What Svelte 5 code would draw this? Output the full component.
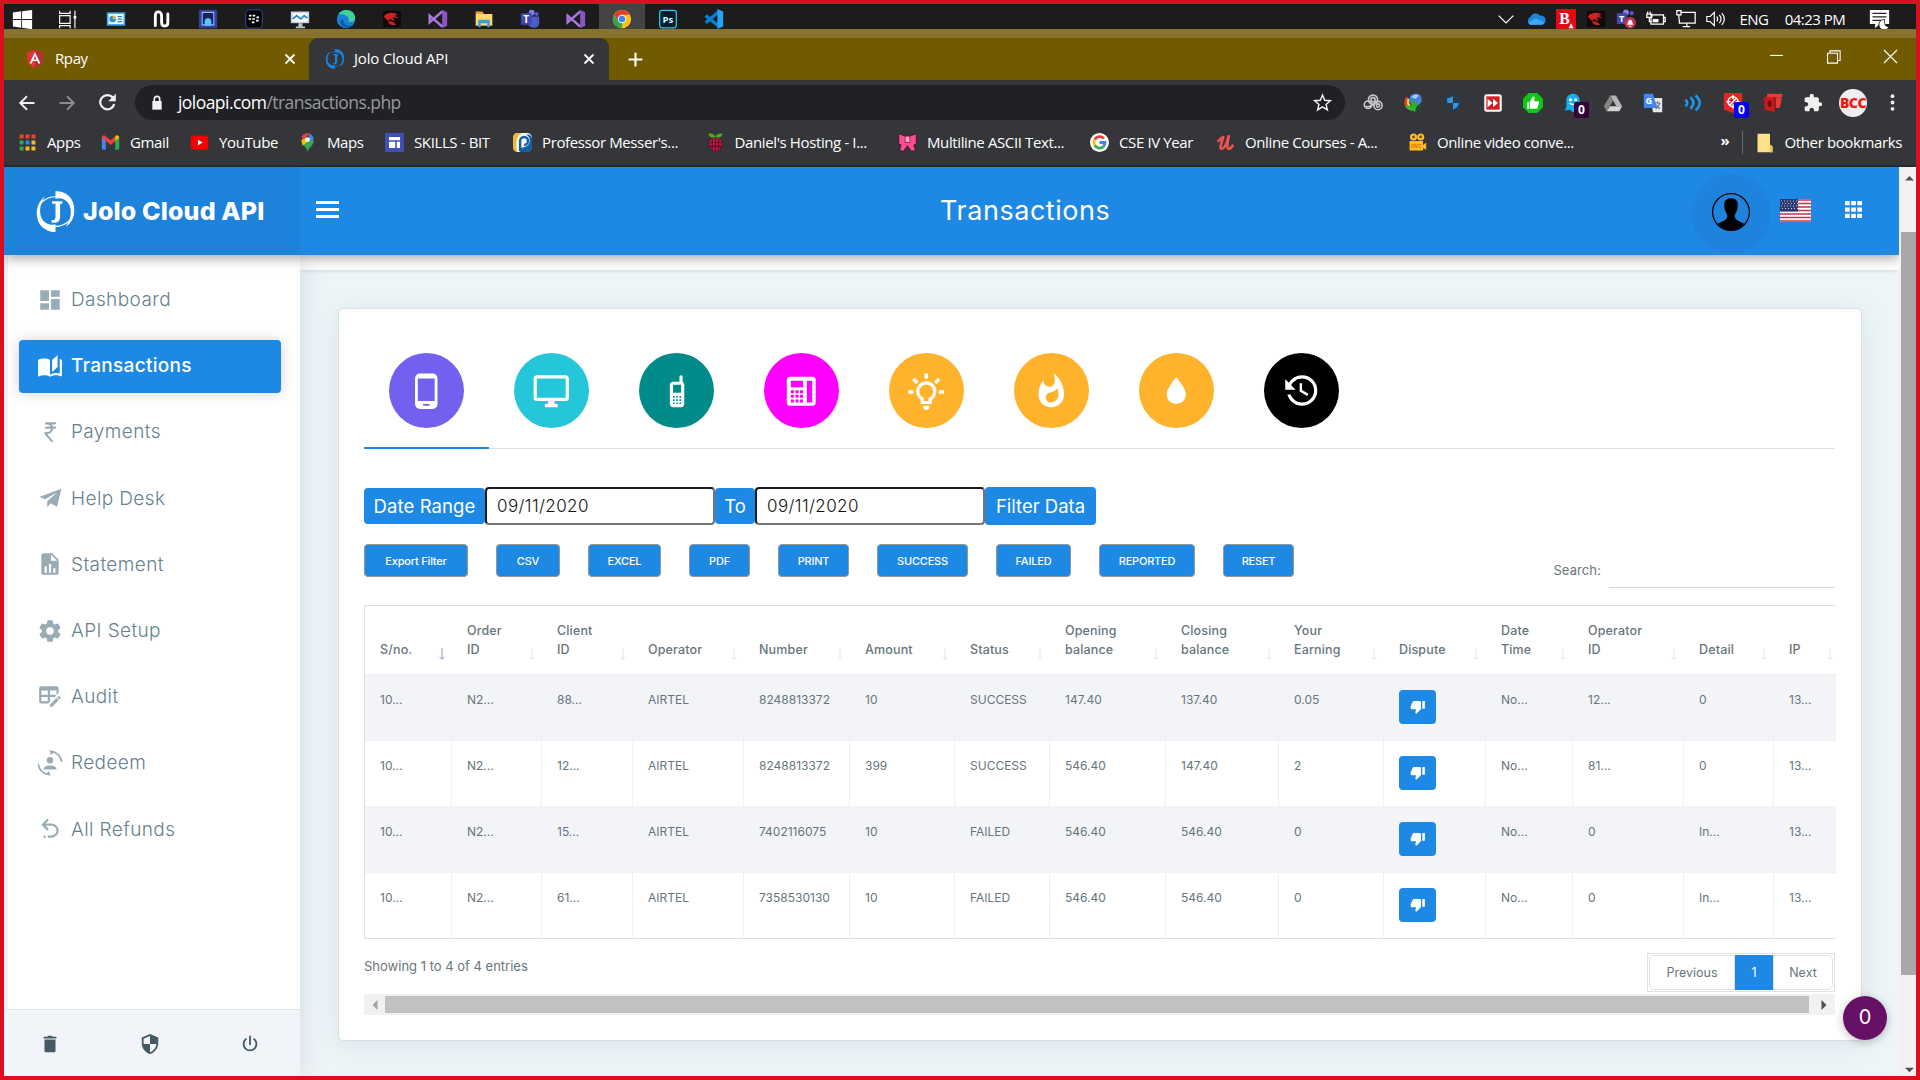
<script>
  // Shapes for every icon, on a 24 x 24 grid.
  const art = {
    windows: '<path fill="#fff" d="M1 4l9.500-1.300V11.500H1zM11.500 2.500L23 1v10.500H11.500zM1 12.500h9.500v8.800L1 20zM11.500 12.500H23V23l-11.500-1.500z"/>',
    taskview: '<path fill="none" stroke="#fff" stroke-width="1.300" d="M3 2v3h12V2M3 22v-3h12v3M3 7.500h12v9H3zM20.500 2v20"/><path fill="#fff" d="M19 8h3v3h-3z"/>',
    panel: '<path fill="#47a9e6" d="M1 4h22v16H1z"/><path fill="#e8f6ff" d="M3 6h18v12H3z"/><circle cx="8" cy="12" r="4" fill="#2f8fd0"/><path fill="#f2b632" d="M8 12V8a4 4 0 0 1 4 4z"/><path stroke="#2f7fc0" stroke-width="1.500" d="M14 9h5M14 12h5M14 15h5"/>',
    nu: '<path fill="none" stroke="#fff" stroke-width="3.400" stroke-linecap="round" d="M4 20V8c0-6 7.500-6 7.500 0v8c0 6 7.500 6 7.500 0V6"/>',
    frame: '<path fill="#2f3f9e" d="M1 1h22v22H1z"/><path fill="#18245e" stroke="#9db0ff" stroke-width="1.300" d="M5 4h14v15H5z"/><path fill="#57c5ff" d="M8 20v-5a4 4 0 0 1 8 0v5z"/>',
    bb: '<rect x="2" y="1" width="20" height="22" rx="4" fill="#050608" stroke="#3d4ea8"/><path fill="#fff" d="M6 7h3v2H6zM10.500 7h3v2h-3zM5.500 11h3v2h-3zM10 11h3v2h-3zM15 9h3v2h-3zM9.500 15h3v2h-3zM14.500 13h3v2h-3z"/>',
    monitorchart: '<path fill="#c9d3d8" d="M1 3h22v14H1z"/><path fill="#fff" d="M3 5h18v10H3z"/><path fill="none" stroke="#2487c9" stroke-width="2" d="M3 12l5-4 5 4 4-4 4 3"/><path fill="#b7c1c6" d="M10 17h5v4h3v2H7v-2h3z"/>',
    edge: '<circle cx="12" cy="12" r="11" fill="#1683d8"/><path fill="#43d19a" d="M3 6C9-2 23 0 23 11c0 4-4 5-8 4 2-5-3-9-12-9z"/><path fill="#0c59a4" d="M9 13c0 6 5 9 11 6-4 6-14 4-15-3 0-3 2-5 4-3z"/>',
    dragon: '<rect x="1" y="2" width="22" height="20" rx="3" fill="#120808"/><path fill="#cf2226" d="M2 9c4-5 12-6 17-2l-4 1 5 3-7-1 2 5-5-3-3 2zM7 15c4-1 8 1 10 4-5 1-8 0-10-4z"/>',
    vs: '<path fill="#8a54c6" d="M17 1l6 3v16l-6 3z"/><path fill="none" stroke="#a678de" stroke-width="3" d="M17 3L2 16V8l15 13"/>',
    folder: '<path fill="#e8a33b" d="M2 3h8l2 3h-10z"/><path fill="#ffd86b" d="M2 6h20v14H2z"/><path fill="#3f9be0" d="M5 22v-9h14v9h-3v-5H8v5z"/>',
    teams: '<circle cx="14" cy="4.500" r="3.500" fill="#7b83eb"/><circle cx="20" cy="6" r="2.500" fill="#5059c9"/><path fill="#5059c9" d="M10 9h13v8c0 6-10 8-13 2z"/><path fill="#4348a8" d="M1 5h13v14H1z"/><text x="4" y="16.500" font-size="12" font-weight="700" fill="#fff">T</text>',
    teamsalert: '<circle cx="12" cy="4" r="3.500" fill="#7b83eb"/><circle cx="19" cy="5" r="2.500" fill="#5059c9"/><path fill="#4348a8" d="M1 5h12v13H1z"/><text x="3.500" y="15.500" font-size="11" font-weight="700" fill="#fff">T</text><circle cx="17" cy="16.500" r="7" fill="#c4314b"/><path fill="#fff" d="M13 19c1.500-1 1-6 4-6s2.500 5 4 6zM15.500 20h3v1.300h-3z"/>',
    chrome: '<circle cx="12" cy="12" r="11" fill="#fbc116"/><path fill="#e33b2e" d="M2.500 6.500L7.500 15 12 7h9.500A11 11 0 0 0 2.500 6.500z"/><path fill="#2da94f" d="M2.500 6.500L7.700 15l5 1.500L11.500 23A11 11 0 0 1 2.500 6.500z"/><circle cx="12" cy="12" r="5" fill="#fff"/><circle cx="12" cy="12" r="4" fill="#3f83f0"/>',
    ps: '<rect x="2" y="1.500" width="20" height="21" rx="3" fill="#061e2b" stroke="#31c5f0" stroke-width="1.500"/><text x="5.500" y="16.500" font-size="11.500" font-weight="700" fill="#d9f5ff">Ps</text>',
    vscode: '<path fill="none" stroke="#0d7fd0" stroke-width="4" d="M17 4L2 16.500M17 20L2 8"/><path fill="#26a3f2" d="M16 0l7 3v18l-7 3z"/>',
    chevron: '<path fill="none" stroke="#fff" stroke-width="1.800" d="M1 7l11 11L23 7"/>',
    cloud: '<path fill="#1b86dc" d="M5 19a5 5 0 0 1 0-9 7 7 0 0 1 12-2 5.500 5.500 0 0 1 2 11z"/><path fill="#39a8f5" d="M3 16l9-5 10 5c-1 2-2 3-4 3H6c-2 0-3-1-3-3z"/>',
    bit: '<path fill="#df0b14" d="M0 0h24v25H0z"/><text x="4" y="18" font-size="19" font-weight="700" font-family="Liberation Serif" fill="#fff">B</text><path fill="#fff" d="M15 23l3-6 3 6z"/>',
    battery: '<path fill="none" stroke="#fff" stroke-width="1.500" d="M6 7h15v11H6zM21 10h2v5h-2M1 6h6v4H1zM2 3v3M5 3v3M4 10v5h3"/><path fill="#fff" d="M8 12h7v4H8z"/>',
    network: '<path fill="none" stroke="#fff" stroke-width="1.500" d="M6 4h17v13H4v-5M13 17v4M8 21h9M1 2h5v5H1zM3.500 7v5"/>',
    sound: '<path fill="none" stroke="#fff" stroke-width="1.400" d="M1 9h4l5-5v16l-5-5H1zM13 9q2 3 0 6M16 7q4 5 0 10M19 5q6 7 0 14"/>',
    notes: '<path fill="#fff" d="M1 1h22v16H12l-5 5v-5H1z"/><path stroke="#222" stroke-width="1.500" d="M4 5h16M4 9h16M4 13h10"/><path fill="#fff" stroke="#222" d="M18 12a6 6 0 1 0 5 8c-4 1-6-3-5-8z"/>',
    angular: '<path fill="#e23237" d="M12 1l10 3.500-1.500 13L12 23l-8.500-5.500L2 4.500z"/><path fill="#b52e31" d="M12 1l10 3.500-1.500 13L12 23z"/><path fill="#fff" d="M12 3.500L5.500 17.500H8l1.400-3.200h5.200l1.400 3.200h2.500zM12 8.500l1.800 4h-3.600z" fill-rule="evenodd"/>',
    jolo: '<path fill="currentColor" d="M12 0c7 0 11 5 11 11 0 5-2 8-5 10 2-3 3-6 3-9 0-5-4-9-9-7.500zM12 24C5 24 1 19 1 13c0-4 2-8 5-10-2 3-3 5-3 9 0 5 4 9 9 7.500z"/><ellipse cx="12" cy="12" rx="10.200" ry="8.700" fill="none" stroke="currentColor" stroke-width=".6"/><path fill="currentColor" d="M10 6h6v1.500h-1.300V15c0 3-2 4-5 3.500V17c1.500.2 2.300-.3 2.300-2V7.500h-2z"/>',
    close: '<path fill="none" stroke="currentColor" stroke-width="3.600" d="M3 3l18 18M21 3L3 21"/>',
    plus: '<path fill="none" stroke="currentColor" stroke-width="3.400" d="M12 1v22M1 12h22"/>',
    winmin: '<path stroke="#fff" stroke-width="2" d="M0 10h24"/>',
    winmax: '<path fill="none" stroke="#fff" stroke-width="1.800" d="M1 5.500h17v17H1zM5 5V1.500h17.500V18h-4"/>',
    winclose: '<path fill="none" stroke="#fff" stroke-width="2" d="M0 0l24 24M24 0L0 24"/>',
    back: '<path fill="none" stroke="currentColor" stroke-width="2.500" d="M22 12H3M12 3l-9 9 9 9"/>',
    forward: '<path fill="none" stroke="currentColor" stroke-width="2.500" d="M2 12h19M12 3l9 9-9 9"/>',
    reload: '<path fill="none" stroke="currentColor" stroke-width="2.800" d="M20.500 14A9 9 0 1 1 18.500 5.500L21 8"/><path fill="currentColor" d="M22.500 1v9.500H13z"/>',
    lock: '<path fill="currentColor" d="M5 9h14v13H5z"/><path fill="none" stroke="currentColor" stroke-width="2.500" d="M8 10V6a4 4 0 0 1 8 0v4"/>',
    star: '<path fill="none" stroke="currentColor" stroke-width="1.800" d="M12 2.500l2.800 6.600 7.200.6-5.500 4.700 1.700 7L12 17.600l-6.200 3.800 1.700-7L2 9.700l7.200-.6z"/>',
    rings: '<g fill="none" stroke="#c9c9c9" stroke-width="1.900"><circle cx="12" cy="8" r="5.500"/><circle cx="12" cy="8" r="2.500"/><circle cx="6" cy="14" r="4.500"/><circle cx="18" cy="15" r="5"/><circle cx="18" cy="15" r="2"/><path d="M3 16q5 2 10-3"/></g>',
    globe: '<g fill="none" stroke-width="3"><path stroke="#e0392b" d="M5 5Q0 13 7 19"/><path stroke="#f2dc2a" d="M7 7q-3 6 3 11"/><path stroke="#3db54a" d="M4 15q3 5 9 5"/></g><circle cx="15" cy="8" r="7.500" fill="#4a7fe0"/><path fill="#a9cdfa" d="M10 5q4-5 9-2l-4 4z"/><path fill="#2fae2f" d="M10 10h7v5h5l-8 8-8-8h4z"/><path fill="#12500f" d="M17 15h5l-8 8z"/>',
    shieldblue: '<path fill="#1e3d5c" d="M12 1l9 3v8c0 6-5 9-9 11-4-2-9-5-9-11V4z"/><path fill="#35363a" d="M12 3l7 2.500V12c0 5-4 7-7 9-3-2-7-4-7-9V5.500z"/><path fill="#2f95e3" d="M12 4v8H5V6.500zM12 12h7c0 4-4 7-7 8z"/>',
    skip: '<rect x="1.500" y="1.500" width="21" height="21" rx="3" fill="#fff"/><path fill="#d01f22" d="M4 4h16v16H4z"/><path fill="#fff" d="M5.500 7l6 5-6 5zM12 7l6 5-6 5z"/>',
    thumb: '<path fill="#10c617" d="M7 0h10l7 7v10l-7 7H7l-7-7V7z"/><path fill="#fff" d="M5 11h2v8H5zM8 11l4-7 2 1-.5 5H19v3l-2 6H8z"/>',
    ghost: '<path fill="#17aef0" d="M4 9c0-11 16-11 16 0v10l2 4-6-2-4 2-4-3-6 1 2-4z"/><circle cx="9" cy="8" r="1.800" fill="#fff"/><circle cx="15" cy="8" r="1.800" fill="#fff"/><path d="M8 12q4 4 8 0" stroke="#fff" stroke-width="1.500" fill="none"/>',
    drive: '<path fill="#b5b5b5" d="M8.500 3h7L23 16h-7z"/><path fill="#858585" d="M8.500 3L1 16l3.500 6L12 9z"/><path fill="#d3d3d3" d="M8.500 16H23l-3.500 6h-15z"/>',
    translate: '<path fill="#e4e7ec" d="M9 6h14v17H12z"/><path fill="#4285f4" d="M1 1h11l5 17H1z"/><text x="3" y="13" font-size="11" font-weight="700" fill="#fff">G</text><path stroke="#6a7280" stroke-width="1.300" fill="none" d="M14 12h7M17.500 10v2M20 12q-1 5-5 7M15.500 14l5 5"/>',
    waves: '<path fill="none" stroke="#1999f2" stroke-width="3" d="M3 8q4 4 0 8M9 5q7 7 0 14M15 3q10 9 0 18"/>',
    target: '<path fill="#e32426" d="M1 0h22v20l-11 4-11-4z"/><g fill="none" stroke="#fff" stroke-width="1.700"><circle cx="12" cy="10.500" r="6"/><path d="M4 10.500h5M15 10.500h5M12 2.500v5M12 13.500v5M8.500 14.500l7-8"/></g>',
    tag: '<path fill="#c8191c" d="M1 5l13-3v21L2 20z"/><path fill="#ee3a36" d="M5 1h18v4H5z"/><path fill="#ee3a36" d="M15 5h7v5l-2 8h-5z"/><ellipse cx="8" cy="13" rx="2.500" ry="4" fill="#6f0f10"/><path stroke="#8d1112" d="M14.500 5v16"/>',
    puzzle: '<path fill="#f1f1f1" d="M20.500 11H19V7C19 5.890 18.100 5 17 5H13V3.500A2.500 2.500 0 0 0 8 3.500V5H4A2 2 0 0 0 2 7V10.800H3.500C5 10.800 6.200 12 6.200 13.500S5 16.200 3.500 16.200H2V20A2 2 0 0 0 4 22H7.800V20.500C7.800 19 9 17.800 10.500 17.800S13.200 19 13.200 20.500V22H17A2 2 0 0 0 19 20V16H20.500A2.500 2.500 0 0 0 20.500 11Z"/>',
    dots: '<g fill="currentColor"><circle cx="12" cy="4" r="2.400"/><circle cx="12" cy="12" r="2.400"/><circle cx="12" cy="20" r="2.400"/></g>',
    appgrid: '<path fill="#ee4035" d="M2 2h5v5H2zM9.500 2h5v5h-5zM17 2h5v5h-5z"/><path fill="#2fa84f" d="M2 9.500h5v5H2zM2 17h5v5H2z"/><path fill="#2f86ee" d="M9.500 9.500h5v5h-5z"/><path fill="#f5b72c" d="M17 9.500h5v5h-5zM9.500 17h5v5h-5zM17 17h5v5h-5z"/>',
    gmail: '<path fill="#4285f4" d="M1 6h5v15H2l-1-1z"/><path fill="#34a853" d="M18 6h5v14l-1 1h-4z"/><path fill="#ea4335" d="M1 6c0-3 3-4 5-2l6 5 6-5v6l-6 5-6-5-5-4z"/><path fill="#fbbc04" d="M18 4c2-2 5-1 5 2l-5 4z"/>',
    youtube: '<rect x="1" y="3" width="22" height="18" rx="4" fill="#f50000"/><path fill="#fff" d="M10 8.500l6 3.500-6 3.500z"/>',
    pin: '<path fill="#34a853" d="M5 13c3 4 6 5 7 11 1-6 8-8 8-15l-4-4z"/><path fill="#ea4335" d="M5 4c3-4 7-4 10-3L6 10z"/><path fill="#4285f4" d="M14 1c4 1 5 4 6 6l-6 4z"/><path fill="#fbbc04" d="M4 9l6-3 1 6-5 4z"/><circle cx="12" cy="8.500" r="3" fill="#f6f6f6"/>',
    skills: '<path fill="#3f4fb5" d="M0 0h24v24H0z"/><path fill="#fff" d="M5 5h14v4H5zM5 11h8v8H5zM15 11h4v8h-4z"/>',
    messer: '<rect width="24" height="24" rx="6" fill="#f5f5f5"/><path fill="#f0b733" d="M0 6q0-6 6-6h6C5 2 3 10 5 24Q0 22 0 18z"/><path fill="#155e9f" d="M14 18c9-2 9-12 3-16h3q4 2 4 5v12q0 5-5 5H9v-5z"/><path fill="none" stroke="#155e9f" stroke-width="3" d="M9 23V10a5 5 0 1 1 5 5"/>',
    berry: '<path fill="#55a51c" d="M3 1c5-1 8 1 9 4 1-3 4-5 9-4-1 4-4 6-9 6S4 5 3 1z"/><path fill="#c51a4a" stroke="#391019" d="M12 6c8 0 9 5 8 10-1 4-5 7-8 7s-7-3-8-7C3 11 4 6 12 6z"/><path stroke="#5e0b23" stroke-width="1.500" d="M8 8v12M12 7v15M16 8v12M5 12h14M5 17h14"/>',
    bow: '<path fill="#ff4d94" stroke="#3c1324" d="M1 1l8 3h6l8-3v13l-3 1 2 7-5 1-5-7-5 7-5-1 2-7-3-1z"/><path fill="#ff9cc6" stroke="#7c1f49" d="M9 4h6v8H9z"/>',
    google: '<circle cx="12" cy="12" r="12" fill="#fff"/><path fill="none" stroke="#ea4335" stroke-width="3.500" d="M17.500 7A7 7 0 0 0 6 8.500"/><path fill="none" stroke="#fbbc05" stroke-width="3.500" d="M6 8.500a7 7 0 0 0 0 7"/><path fill="none" stroke="#34a853" stroke-width="3.500" d="M6 15.500a7 7 0 0 0 11 1.500"/><path fill="none" stroke="#4285f4" stroke-width="3.500" d="M12 12h7a7 7 0 0 1-2 5"/>',
    udemy: '<path fill="none" stroke="#ec5252" stroke-width="3.300" stroke-linecap="round" stroke-linejoin="round" d="M3 10c4-3 7-7 6-4-2 6-5 14-2 14 4 0 7-8 9-16-1 6-3 16 0 16 2 0 4-2 5-4"/>',
    camera: '<g fill="#ffbd21"><circle cx="7" cy="5" r="4.500"/><circle cx="16" cy="5" r="4.500"/><path d="M2 10h17v12H2zM19 15l4-3v9l-4-2z"/></g><circle cx="7" cy="5" r="1.700" fill="#6b4c00"/><circle cx="16" cy="5" r="1.700" fill="#6b4c00"/><text x="3.500" y="19" font-size="7" font-weight="700" fill="#e66a00">OVC</text>',
    bookfolder: '<path fill="#ffe08a" d="M3 1h15v13l3 2v7H3z"/><path fill="#e9c25c" d="M18 14l3 2v7h-3z"/>',
    dashboard: '<path d="M13 3V9H21V3M13 21H21V11H13M3 21H11V15H3M3 13H11V3H3V13Z"/>',
    book: '<path d="M19 2L14 6.500V17.500L19 13V2M6.500 5C4.550 5 2.450 5.400 1 6.500V21.160C1 21.410 1.250 21.660 1.500 21.660C1.600 21.660 1.650 21.590 1.750 21.590C3.100 20.940 5.050 20.500 6.500 20.500C8.450 20.500 10.550 20.900 12 22C13.350 21.150 15.800 20.500 17.500 20.500C19.150 20.500 20.850 20.810 22.250 21.560C22.350 21.610 22.400 21.590 22.500 21.590C22.750 21.590 23 21.340 23 21.090V6.500C22.400 6.050 21.750 5.750 21 5.500V19C19.900 18.650 18.700 18.500 17.500 18.500C15.800 18.500 13.350 19.150 12 20V6.500C10.550 5.400 8.450 5 6.500 5Z"/>',
    rupee: '<path d="M8 3H18L17 5H13.740C14.220 5.580 14.580 6.260 14.790 7H18L17 9H15C14.750 11.570 12.740 13.630 10.200 13.960V14H9.500L15.500 21H13L7 14V12H9.500C11.260 12 12.720 10.700 12.960 9H7L8 7H12.660C12.100 5.820 10.900 5 9.500 5H7L8 3Z"/>',
    plane: '<path d="M22.500 3.500L2 11l5.500 2.200L18.500 7 9.500 15v5.500l3-3.700 6 3.200z"/>',
    filechart: '<path d="M13 9H18.500L13 3.500V9M6 2H14L20 8V20A2 2 0 0 1 18 22H6C4.890 22 4 21.100 4 20V4C4 2.890 4.890 2 6 2M7 20H9V14H7V20M11 20H13V12H11V20M15 20H17V16H15V20Z"/>',
    gear: '<path d="M12 15.500A3.500 3.500 0 0 1 8.500 12A3.500 3.500 0 0 1 12 8.500A3.500 3.500 0 0 1 15.500 12A3.500 3.500 0 0 1 12 15.500M19.430 12.970C19.470 12.650 19.500 12.330 19.500 12C19.500 11.670 19.470 11.340 19.430 11L21.540 9.370C21.730 9.220 21.780 8.950 21.660 8.730L19.660 5.270C19.540 5.050 19.270 4.960 19.050 5.050L16.560 6.050C16.040 5.660 15.500 5.320 14.870 5.070L14.500 2.420C14.460 2.180 14.250 2 14 2H10C9.750 2 9.540 2.180 9.500 2.420L9.130 5.070C8.500 5.320 7.960 5.660 7.440 6.050L4.950 5.050C4.730 4.960 4.460 5.050 4.340 5.270L2.340 8.730C2.210 8.950 2.270 9.220 2.460 9.370L4.570 11C4.530 11.340 4.500 11.670 4.500 12C4.500 12.330 4.530 12.650 4.570 12.970L2.460 14.630C2.270 14.780 2.210 15.050 2.340 15.270L4.340 18.730C4.460 18.950 4.730 19.030 4.950 18.950L7.440 17.940C7.960 18.340 8.500 18.680 9.130 18.930L9.500 21.580C9.540 21.820 9.750 22 10 22H14C14.250 22 14.460 21.820 14.500 21.580L14.870 18.930C15.500 18.670 16.040 18.340 16.560 17.940L19.050 18.950C19.270 19.030 19.540 18.950 19.660 18.730L21.660 15.270C21.780 15.050 21.730 14.780 21.540 14.630L19.430 12.970Z"/>',
    tableedit: '<path d="M21.700 13.350L20.700 14.350L18.650 12.300L19.650 11.300C19.860 11.080 20.210 11.080 20.420 11.300L21.700 12.580C21.920 12.790 21.920 13.140 21.700 13.350M12 18.940V21H14.060L20.120 14.880L18.070 12.830L12 18.940M4 2H18A2 2 0 0 1 20 4V8.170L16.170 12H12V16.170L10.170 18H4A2 2 0 0 1 2 16V4A2 2 0 0 1 4 2M4 6V10H10V6H4M12 6V10H18V6H12M4 12V16H10V12H4Z"/>',
    redeem: '<circle cx="12" cy="9.500" r="3"/><path d="M6 18c0-5 12-5 12 0z"/><path fill="none" stroke="currentColor" stroke-width="1.500" d="M12.500 1.200A11 11 0 0 1 22.800 11M11.500 22.800A11 11 0 0 1 1.200 13"/><path d="M11.500.4l5 1-3.500 3.200zM12.500 23.600l-5-1 3.500-3.200z"/>',
    undo: '<path d="M13.500 7A6.500 6.500 0 0 1 13.500 20H10V18H13.500A4.500 4.500 0 0 0 13.500 9H7.830L10.910 12.090L9.500 13.500L4 8L9.500 2.500L10.920 3.910L7.830 7H13.500M6 18H8V20H6V18Z"/>',
    trash: '<path d="M5 4h4l1-1h4l1 1h4v2H5zM6 7h12v12.500a1.500 1.500 0 0 1-1.500 1.500h-9A1.500 1.500 0 0 1 6 19.500z"/>',
    security: '<path fill-rule="evenodd" d="M12 12H19C18.470 16.110 15.720 19.780 12 20.920V12H5V6.300L12 3.190M12 1L3 5V11C3 16.550 6.840 21.730 12 23C17.160 21.730 21 16.550 21 11V5L12 1Z"/>',
    power: '<path d="M16.560 5.440L15.110 6.890C16.840 7.940 18 9.830 18 12A6 6 0 0 1 6 12C6 9.830 7.160 7.940 8.880 6.880L7.440 5.440C5.360 6.880 4 9.280 4 12A8 8 0 0 0 20 12C20 9.280 18.640 6.880 16.560 5.440M13 3H11V13H13"/>',
    phone: '<path d="M17.250 18H6.750V4H17.250M14 21H10V20H14M16 1H8A3 3 0 0 0 5 4V20A3 3 0 0 0 8 23H16A3 3 0 0 0 19 20V4A3 3 0 0 0 16 1Z"/>',
    monitor: '<path d="M21 16H3V4H21M21 2H3C1.890 2 1 2.890 1 4V16A2 2 0 0 0 3 18H10V20H8V22H16V20H14V18H21A2 2 0 0 0 23 16V4C23 2.890 22.100 2 21 2Z"/>',
    basic: '<path d="M15 2A1 1 0 0 0 14 3V6H10C8.890 6 8 6.890 8 8V20C8 21.110 8.890 22 10 22H15C16.110 22 17 21.110 17 20V8C17 7.260 16.600 6.620 16 6.280V3A1 1 0 0 0 15 2M10 8H15V13H10V8M10 15H11V16H10V15M12 15H13V16H12V15M14 15H15V16H14V15M10 17H11V18H10V17M12 17H13V18H12V17M14 17H15V18H14V17M10 19H11V20H10V19M12 19H13V20H12V19M14 19H15V20H14V19Z"/>',
    desk: '<path fill-rule="evenodd" d="M5 3h14a2 2 0 0 1 2 2v14a2 2 0 0 1-2 2H5a2 2 0 0 1-2-2V5a2 2 0 0 1 2-2zM5.500 5.500v4h7.600v-4zM15.500 5.500V19h3.300V5.500zM5.500 11.300v1.900h1.900v-1.900zM8.400 11.300v1.900h1.900v-1.900zM11.200 11.300v1.900h1.900v-1.900zM5.500 14.200v1.900h1.900v-1.900zM8.400 14.200v1.900h1.900v-1.900zM11.200 14.200v1.900h1.900v-1.900zM5.500 17.100V19h1.900v-1.900zM8.400 17.100V19h1.900v-1.900zM11.200 17.100V19h1.900v-1.900z"/>',
    bulb: '<g fill="none" stroke="currentColor" stroke-width="2"><path d="M9.500 19v-2.300a5.300 5.300 0 1 1 5 0V19z"/></g><path d="M10 21h4v1.500l-1 1h-2l-1-1z"/><path fill="none" stroke="currentColor" stroke-width="2.200" d="M12 1v3.200M.8 12.500h3.400M19.800 12.500h3.400M4 4.300l2.400 2.500M20 4.300l-2.400 2.500"/>',
    fire: '<path d="M13.500.67s.74 2.650.74 4.800c0 2.060-1.350 3.730-3.410 3.730-2.070 0-3.630-1.670-3.630-3.730l.03-.36C5.210 7.510 4 10.620 4 14c0 4.420 3.580 8 8 8s8-3.580 8-8C20 8.610 17.410 3.800 13.500.67zM11.710 19c-1.780 0-3.220-1.400-3.220-3.140 0-1.620 1.050-2.760 2.810-3.120 1.770-.36 3.600-1.210 4.620-2.580.39 1.290.59 2.650.59 4.040 0 2.650-2.150 4.800-4.800 4.800z"/>',
    water: '<path d="M12 20A6 6 0 0 1 6 14C6 10 12 3.250 12 3.250C12 3.250 18 10 18 14A6 6 0 0 1 12 20Z"/>',
    history: '<path d="M11 7V12.110L15.710 14.900L16.500 13.620L12.500 11.250V7M12.500 2C8.970 2 5.910 3.920 4.270 6.770L2 4.500V11H8.500L5.750 8.250C6.960 5.730 9.500 4 12.500 4A7.500 7.500 0 0 1 12.500 19C9.230 19 6.470 16.910 5.440 14H3.340C4.440 18.030 8.110 21 12.500 21A9.500 9.500 0 0 0 12.500 2Z"/>',
    dislike: '<path d="M19 15H23V3H19M15 3H6C5.170 3 4.460 3.500 4.160 4.220L1.140 11.270C1.050 11.500 1 11.740 1 12V14A2 2 0 0 0 3 16H9.310L8.360 20.570C8.340 20.670 8.330 20.770 8.330 20.880C8.330 21.300 8.500 21.670 8.770 21.940L9.830 23L16.410 16.410C16.780 16.050 17 15.550 17 15V5C17 3.890 16.100 3 15 3Z"/>',
    user: '<circle cx="12" cy="12" r="11.600" fill="none" stroke="#000" stroke-width=".8"/><path fill="#000" d="M12 3.300c3 0 4.500 1.700 4.300 4.500-.1 3-1.100 4.700-1.800 5.700-.5 2.500.5 3.500 5.700 5.700C18 22 15 23.500 12 23.500S6 22 3.800 19.200c5.200-2.200 6.200-3.200 5.700-5.700-.7-1-1.700-2.700-1.800-5.700C7.500 5 9 3.300 12 3.300z"/>',
    grid: '<path d="M0 0h6.600v6H0zM8.700 0h6.600v6H8.700zM17.400 0H24v6h-6.600zM0 9h6.600v6H0zM8.700 9h6.600v6H8.700zM17.400 9H24v6h-6.600zM0 18h6.600v6H0zM8.700 18h6.600v6H8.700zM17.400 18H24v6h-6.600z"/>',
    sort: '<path fill="none" stroke="currentColor" stroke-width="1.600" d="M12 0v22M7 18l5 4.500 5-4.500"/>',
    up: '<path d="M0 17L12 5l12 12z"/>',
    down: '<path d="M0 7l12 12L24 7z"/>',
    left: '<path d="M18 0v24L6 12z"/>',
    right: '<path d="M6 0v24l12-12z"/>'
  };

  const pinned = ['panel', 'nu', 'frame', 'bb', 'monitorchart', 'edge', 'dragon', 'vs', 'folder', 'teams', 'vs', 'chrome', 'ps', 'vscode'];
  const tray = ['chevron', 'cloud', 'bit', 'dragon', 'teamsalert', 'battery', 'network', 'sound'];

  const extensions = [
    { icon: 'rings' }, { icon: 'globe' }, { icon: 'shieldblue' }, { icon: 'skip' }, { icon: 'thumb' },
    { icon: 'ghost', badge: '0', tone: 'plum' }, { icon: 'drive' }, { icon: 'translate' }, { icon: 'waves' },
    { icon: 'target', badge: '0', tone: 'blue' }, { icon: 'tag' }, { icon: 'puzzle' }
  ];

  const bookmarks = [
    { icon: 'appgrid', label: 'Apps', width: 83 },
    { icon: 'gmail', label: 'Gmail', width: 89 },
    { icon: 'youtube', label: 'YouTube', width: 108 },
    { icon: 'pin', label: 'Maps', width: 87 },
    { icon: 'skills', label: 'SKILLS - BIT', width: 128 },
    { icon: 'messer', label: "Professor Messer's...", width: 192.5 },
    { icon: 'berry', label: "Daniel's Hosting - I...", width: 192.5 },
    { icon: 'bow', label: 'Multiline ASCII Text...', width: 192 },
    { icon: 'google', label: 'CSE IV Year', width: 126 },
    { icon: 'udemy', label: 'Online Courses - A...', width: 192 },
    { icon: 'camera', label: 'Online video conve...', width: 180 }
  ];

  const menu = [
    { icon: 'dashboard', label: 'Dashboard' },
    { icon: 'book', label: 'Transactions', active: true },
    { icon: 'rupee', label: 'Payments' },
    { icon: 'plane', label: 'Help Desk' },
    { icon: 'filechart', label: 'Statement' },
    { icon: 'gear', label: 'API Setup' },
    { icon: 'tableedit', label: 'Audit' },
    { icon: 'redeem', label: 'Redeem' },
    { icon: 'undo', label: 'All Refunds' }
  ];

  const services = [
    { icon: 'phone', tone: 'violet' },
    { icon: 'monitor', tone: 'cyan' },
    { icon: 'basic', tone: 'teal' },
    { icon: 'desk', tone: 'magenta' },
    { icon: 'bulb', tone: 'amber' },
    { icon: 'fire', tone: 'amber' },
    { icon: 'water', tone: 'amber' },
    { icon: 'history', tone: 'black' }
  ];

  const exportButtons = [
    { label: 'Export Filter', width: 104 }, { label: 'CSV', width: 64 }, { label: 'EXCEL', width: 73 },
    { label: 'PDF', width: 61 }, { label: 'PRINT', width: 71 }, { label: 'SUCCESS', width: 91 },
    { label: 'FAILED', width: 75 }, { label: 'REPORTED', width: 96 }, { label: 'RESET', width: 71 }
  ];

  const columns = [
    { label: 'S/no.', width: 87 }, { label: 'Order ID', width: 90 }, { label: 'Client ID', width: 91 },
    { label: 'Operator', width: 111 }, { label: 'Number', width: 106 }, { label: 'Amount', width: 105 },
    { label: 'Status', width: 95 }, { label: 'Opening balance', width: 116 }, { label: 'Closing balance', width: 113 },
    { label: 'Your Earning', width: 105 }, { label: 'Dispute', width: 102 }, { label: 'Date Time', width: 87 },
    { label: 'Operator ID', width: 111 }, { label: 'Detail', width: 90 }, { label: 'IP', width: 62 }
  ];

  const rows = [
    ['10...', 'N2...', '88...', 'AIRTEL', '8248813372', '10', 'SUCCESS', '147.40', '137.40', '0.05', null, 'No...', '12...', '0', '13...'],
    ['10...', 'N2...', '12...', 'AIRTEL', '8248813372', '399', 'SUCCESS', '546.40', '147.40', '2', null, 'No...', '81...', '0', '13...'],
    ['10...', 'N2...', '15...', 'AIRTEL', '7402116075', '10', 'FAILED', '546.40', '546.40', '0', null, 'No...', '0', 'In...', '13...'],
    ['10...', 'N2...', '61...', 'AIRTEL', '7358530130', '10', 'FAILED', '546.40', '546.40', '0', null, 'No...', '0', 'In...', '13...']
  ];
</script>

{#snippet icon(name, size = 20)}
  <svg class="icon" viewBox="0 0 24 24" width={size} height={size} fill="currentColor" aria-hidden="true">{@html art[name]}</svg>
{/snippet}

<div class="screen">
  <div class="taskbar">
    <span class="slot start">{@render icon('windows', 21)}</span>
    <span class="slot views">{@render icon('taskview', 21)}</span>
    {#each pinned as name}
      <span class="slot app" class:running={name === 'chrome'}>{@render icon(name, 20)}</span>
    {/each}
    <div class="tray">
      {#each tray as name}
        <span class="slot status">{@render icon(name, name === 'chevron' ? 16 : 20)}</span>
      {/each}
      <span class="slot lang">ENG</span>
      <span class="slot clock">04:23 PM</span>
      <span class="slot notes">{@render icon('notes', 21)}</span>
    </div>
  </div>
  <div class="strip"></div>

  <div class="tabs">
    <div class="tab">
      {@render icon('angular', 20)}<span class="tab-title">Rpay</span>{@render icon('close', 12)}
    </div>
    <div class="tab current">
      <span class="favicon">{@render icon('jolo', 20)}</span><span class="tab-title">Jolo Cloud API</span>{@render icon('close', 12)}
    </div>
    <span class="new-tab">{@render icon('plus', 15)}</span>
    <div class="window-controls">
      <span>{@render icon('winmin', 13)}</span>
      <span>{@render icon('winmax', 14)}</span>
      <span>{@render icon('winclose', 13)}</span>
    </div>
  </div>

  <div class="toolbar">
    <span class="nav-btn">{@render icon('back', 18)}</span>
    <span class="nav-btn dim">{@render icon('forward', 18)}</span>
    <span class="nav-btn">{@render icon('reload', 19)}</span>
    <div class="address">
      {@render icon('lock', 16)}
      <span class="url">joloapi.com<span class="path">/transactions.php</span></span>
      {@render icon('star', 19)}
    </div>
    <div class="extensions">
      {#each extensions as ext}
        <span class="ext">
          {@render icon(ext.icon, 20)}
          {#if ext.badge}<span class="count {ext.tone}">{ext.badge}</span>{/if}
        </span>
      {/each}
    </div>
    <span class="profile">BCC</span>
    <span class="more">{@render icon('dots', 19)}</span>
  </div>

  <div class="bookmarks">
    {#each bookmarks as mark}
      <span class="bookmark" style:width="{mark.width}px">{@render icon(mark.icon, 19)}<span>{mark.label}</span></span>
    {/each}
    <div class="other">
      <span class="overflow">»</span>
      <span class="bookmark">{@render icon('bookfolder', 20)}<span>Other bookmarks</span></span>
    </div>
  </div>

  <div class="page">
    <header>
      <div class="brand">{@render icon('jolo', 41)}<span>Jolo Cloud API</span></div>
      <div class="bar">
        <div class="burger"><i></i><i></i><i></i></div>
        <h1>Transactions</h1>
        <div class="avatar">{@render icon('user', 38)}</div>
        <svg class="flag" viewBox="0 0 31 23" width="31" height="23">
          <path fill="#fff" d="M0 0h31v23H0z" />
          <path stroke="#c4354b" stroke-width="1.700" d="M0 1h31M0 4.500h31M0 8h31M0 11.500h31M0 15h31M0 18.500h31M0 22h31" />
          <path fill="#2c3a72" d="M0 0h18v12.500H0z" />
          <path stroke="#c8cee5" stroke-dasharray="1 2" d="M1 2h17M2 4.500h16M1 7h17M2 9.500h16" />
        </svg>
        <span class="apps">{@render icon('grid', 17)}</span>
      </div>
    </header>

    <aside>
      <nav>
        {#each menu as item}
          <div class="item" class:active={item.active}>
            <span class="item-icon">{@render icon(item.icon, 26)}</span><span class="item-label">{item.label}</span>
          </div>
        {/each}
      </nav>
      <footer>
        <span>{@render icon('trash', 22)}</span>
        <span>{@render icon('security', 22)}</span>
        <span>{@render icon('power', 22)}</span>
      </footer>
    </aside>

    <main>
      <div class="crumb"></div>
      <section class="card">
        <div class="services">
          {#each services as service, i}
            <div class="service" class:selected={i === 0}>
              <span class="disc {service.tone}">{@render icon(service.icon, 38.5)}</span>
            </div>
          {/each}
        </div>

        <div class="range">
          <span class="range-label first">Date Range</span>
          <span class="date">09/11/2020</span>
          <span class="range-label to">To</span>
          <span class="date">09/11/2020</span>
          <button class="filter">Filter Data</button>
        </div>

        <div class="tools">
          {#each exportButtons as button}
            <button style:width="{button.width}px">{button.label}</button>
          {/each}
          <label>Search:<span class="search"></span></label>
        </div>

        <table>
          <colgroup>
            {#each columns as column}<col style:width="{column.width}px" />{/each}
          </colgroup>
          <thead>
            <tr>
              {#each columns as column, i}
                <th><div class="head"><span>{column.label}</span><span class="arrow" class:sorted={i === 0}>{@render icon('sort', 12)}</span></div></th>
              {/each}
            </tr>
          </thead>
          <tbody>
            {#each rows as row}
              <tr>
                {#each row as cell}
                  <td>{#if cell === null}<button class="dispute" aria-label="Dispute">{@render icon('dislike', 15.5)}</button>{:else}{cell}{/if}</td>
                {/each}
              </tr>
            {/each}
          </tbody>
        </table>

        <div class="summary">
          <span>Showing 1 to 4 of 4 entries</span>
          <div class="pager"><span class="prev">Previous</span><span class="now">1</span><span class="next">Next</span></div>
        </div>

        <div class="hscroll">
          <span class="faint">{@render icon('left', 10)}</span><i></i><span>{@render icon('right', 10)}</span>
        </div>
      </section>
      <span class="bubble">0</span>
    </main>

    <div class="vscroll">
      <span>{@render icon('up', 9)}</span><i></i><span class="end">{@render icon('down', 9)}</span>
    </div>
  </div>
</div>

<style>
  :global(body) { margin: 0; overflow: hidden; }
  * { box-sizing: border-box; }
  .screen {
    width: 1920px; height: 1080px; border: 4px solid #da0f20; display: flex; flex-direction: column;
    overflow: hidden; font-family: "Open Sans", "Noto Sans", sans-serif; color: #fff;
  }
  .icon { display: block; flex: none; overflow: visible; }

  .taskbar { height: 25px; flex: none; display: flex; background: #1c1c1c; padding-top: 3px; }
  .slot { display: flex; align-items: center; justify-content: center; height: 24px; flex: none; }
  .start { width: 37px; }
  .views { width: 52px; }
  .app { width: 46px; }
  .running { background: #444; height: 25px; margin-top: -3px; padding-top: 4px; }
  .tray { display: flex; margin-left: auto; margin-right: 11px; font-size: 15px; letter-spacing: -0.5px; }
  .status { width: 30px; }
  .lang { width: 46px; }
  .clock { width: 76px; }
  .notes { width: 52px; }
  .strip { height: 9px; flex: none; background: #87732f; }

  .tabs { height: 42px; flex: none; display: flex; background: #725a00; font-size: 15px; }
  .tab { width: 305px; display: flex; align-items: center; padding: 0 13px 0 21px; }
  .tab-title { margin-left: 10px; margin-right: auto; margin-top: -2px; letter-spacing: -0.4px; }
  .current { width: 300px; background: #35363a; border-radius: 9px 9px 0 0; padding: 0 14px 0 16px; }
  .favicon { color: #1685e8; }
  .current .tab-title { margin-left: 9px; letter-spacing: -0.2px; }
  .new-tab { display: flex; align-items: center; margin-left: 19px; }
  .window-controls { display: flex; margin-left: auto; margin-right: -3px; padding-bottom: 5px; }
  .window-controls span { width: 57px; display: flex; align-items: center; justify-content: center; }

  .toolbar { height: 45px; flex: none; display: flex; align-items: center; background: #35363a; padding-left: 3px; color: #f1f1f1; }
  .nav-btn { width: 40px; display: flex; justify-content: center; }
  .dim { color: #8b8c8f; }
  .address {
    width: 1210px; height: 35px; margin-left: 8px; border-radius: 18px; background: #202124;
    display: flex; align-items: center; padding: 0 13px 0 14px;
  }
  .url { font-size: 17.5px; letter-spacing: -0.55px; margin: -2px auto 0 13px; color: #fff; }
  .path { color: #97999c; }
  .extensions { display: flex; margin-left: 8px; }
  .ext { width: 40px; display: flex; justify-content: center; position: relative; }
  .count {
    position: absolute; left: 21px; top: 9px; width: 15px; height: 16px; border-radius: 2px;
    font-size: 12px; line-height: 16px; font-weight: 700; text-align: center; color: #fff;
  }
  .plum { background: #33003a; }
  .blue { background: #0000f5; }
  .profile {
    width: 28px; height: 28px; border-radius: 50%; background: #eee; margin-left: 6px; color: #ea1c12;
    display: flex; align-items: center; justify-content: center; font-size: 14px; font-weight: 800; letter-spacing: -0.5px;
  }
  .more { margin-left: 16px; }

  .bookmarks {
    height: 42px; flex: none; display: flex; align-items: center; background: #35363a; border-bottom: 2px solid #28292b;
    padding: 1px 14px 6px; font-size: 15px; letter-spacing: -0.38px;
  }
  .bookmark { display: flex; align-items: center; gap: 10px; white-space: nowrap; flex: none; }
  .bookmark span { margin-top: -1px; }
  .other { display: flex; align-items: center; margin-left: auto; }
  .overflow { width: 22px; height: 23px; border-right: 1px solid #6b6c6f; margin-right: 12px; line-height: 18px; font-weight: 700; }

  .page {
    height: 909px; display: grid; grid-template: 88px 1fr / 296px 1599px 17px; flex: none;
    background: #edf5f8; font-family: Inter, "Open Sans", sans-serif; color: #67757c;
  }
  header {
    grid-area: 1 / 1 / 2 / 3; display: flex; background: #1e88e5; color: #fff; z-index: 3;
    box-shadow: 0 3px 12px rgba(0, 0, 0, 0.36); clip-path: inset(0 0 -20px 0);
  }
  .brand {
    width: 296px; background: #1d82da; display: flex; align-items: center; gap: 7px; padding-left: 31px;
    font-size: 25px; font-weight: 800; letter-spacing: 0.15px;
  }
  .bar { flex: 1; display: flex; align-items: center; }
  .burger { width: 23px; margin-left: 16px; display: grid; gap: 4px; margin-top: -3px; }
  .burger i { height: 3px; background: #fff; }
  h1 { margin: 0 0 0 601px; font-size: 27px; line-height: 40px; font-weight: 400; letter-spacing: 0.55px; }
  .avatar {
    width: 80px; height: 80px; border-radius: 50%; margin-left: auto; margin-top: 5px; padding-bottom: 3px;
    background: #1e83dc; display: grid; place-items: center;
  }
  .flag { margin: -2px 0 0 9px; }
  .apps { margin: -3px 37px 0 34px; }

  aside {
    display: flex; flex-direction: column; background: #fff; z-index: 2;
    box-shadow: 2px 0 22px rgba(90, 105, 125, 0.17);
  }
  nav { flex: 1; padding: 18.6px 19px 0 11px; border-left: 4px solid #f1f1f1; display: flex; flex-direction: column; gap: 13.2px; }
  .item { height: 53px; display: flex; align-items: center; border-radius: 4px; font-size: 19px; font-weight: 300; color: #67828f; padding-left: 18px; letter-spacing: 0.4px; }
  .item-icon { width: 34px; color: #99abb4; }
  .item-icon, .item-label { margin-top: -1px; }
  .active { background: #1e88e5; color: #fff; font-weight: 500; box-shadow: 0 0 13px rgba(70, 80, 100, 0.25); letter-spacing: 0.3px; }
  .active .item-icon { color: #fff; }
  footer { height: 67px; border-top: 1px solid #dfe5e9; background: #f1f5f9; display: flex; align-items: center; color: #455a64; padding: 1px 0 0 35px; }
  footer span { width: 100px; flex: none; }

  main { position: relative; overflow: hidden; }
  .crumb { height: 15px; background: #fff; box-shadow: 0 1px 4px rgba(60, 80, 100, 0.15); }
  .card {
    margin: 38px 0 0 38px; width: 1524px; height: 733px; background: #fff; border: 1px solid #d5dfe4;
    border-radius: 5px; padding: 0 26px 0 25px; box-shadow: 0 4px 26px rgba(90, 110, 130, 0.13);
  }
  .services { height: 140px; border-bottom: 1px solid #dde1e7; display: flex; padding-top: 44px; }
  .service { width: 125px; height: 96px; display: flex; justify-content: center; }
  .selected { border-bottom: 2px solid #1e88e5; }
  .disc { width: 75px; height: 75px; border-radius: 50%; display: grid; place-items: center; padding-top: 1px; color: #fff; }
  .violet { background: #7460ee; }
  .cyan { background: #26c6da; }
  .teal { background: #008b8b; }
  .magenta { background: #ff00ff; }
  .amber { background: #ffb22b; }
  .black { background: #000; }

  .range { height: 38px; margin-top: 38px; display: flex; align-items: center; font-size: 18.5px; }
  .range-label { height: 36px; background: #1e88e5; color: #fff; border-radius: 4px; display: grid; place-items: center; }
  .first { width: 121px; letter-spacing: 0.1px; }
  .to { width: 40px; }
  .date { width: 230px; height: 38px; border: 2px solid #767676; border-top-color: #1b1b1b; border-left-color: #1b1b1b; border-radius: 4px; color: #111; padding-left: 10px; line-height: 34px; font-size: 17px; font-weight: 300; letter-spacing: 0.4px; }
  button { font-family: inherit; background: #1e88e5; color: #fff; padding: 0; }
  .filter { width: 111px; height: 38px; border: 0; border-radius: 4px; font-size: 18.5px; }

  .tools { height: 80px; display: flex; gap: 28px; padding-top: 19px; }
  .tools button { height: 33px; border: 1px solid #969696; border-radius: 4px; font-size: 11px; font-weight: 500; letter-spacing: -0.2px; flex: none; }
  label { margin-left: auto; display: flex; align-items: flex-start; font-size: 13px; line-height: 53px; letter-spacing: 0.1px; }
  .search { width: 226px; height: 44px; margin-left: 8px; border-bottom: 1px solid #d5dadd; }

  table { width: 1471px; table-layout: fixed; border-collapse: separate; border-spacing: 0; border: 1px solid #dee2e6; border-right: 0; font-size: 12px; }
  th { height: 68px; padding: 0 4px 15.5px 15px; text-align: left; vertical-align: bottom; font-weight: 500; font-size: 12.5px; line-height: 19px; letter-spacing: 0.15px; }
  .head { display: flex; justify-content: space-between; align-items: flex-end; }
  .head span:first-child { width: min-content; }
  th:last-child { padding-right: 0; }
  .arrow { color: #dcdfe2; margin-bottom: -1px; }
  .sorted { color: #7286c0; }
  td { height: 66px; padding: 16px 0 0 15px; vertical-align: top; line-height: 18px; border-top: 1px solid #f0f1f3; border-right: 1px solid #f0f1f3; white-space: nowrap; }
  td:last-child { border-right: 0; }
  tbody tr:nth-child(odd) td { background: #f2f4f8; }
  .dispute { width: 37px; height: 34px; margin-top: -1px; border: 0; border-radius: 4px; display: grid; place-items: center; }

  .summary { height: 55px; display: flex; justify-content: space-between; font-size: 13px; }
  .summary > span { line-height: 55px; }
  .pager { display: flex; height: 39px; margin-top: 14px; border: 1px solid #dee2e6; padding: 1px; text-align: center; line-height: 33px; font-size: 12.5px; }
  .pager span { border: 1px solid #dee2e6; }
  .prev { width: 86px; border-radius: 5px 0 0 5px; }
  .pager .now { width: 38px; background: #1e88e5; color: #fff; border-color: #1e88e5; }
  .next { width: 60px; border-radius: 0 5px 5px 0; }

  .hscroll { width: 1471px; height: 21px; background: #f1f1f1; display: flex; align-items: center; color: #505050; }
  .hscroll i { width: 1424px; height: 17px; background: #c1c1c1; margin-left: 5px; }
  .hscroll span:first-child { margin-left: 6px; }
  .hscroll span:last-child { margin-left: 10px; }
  .faint { color: #a3a3a3; }

  .bubble {
    position: absolute; right: 12px; bottom: 36px; width: 44px; height: 44px; border-radius: 50%;
    background: #671166; color: #fff; text-align: center; line-height: 42px; font-size: 20px; box-shadow: 0 2px 10px rgba(0, 0, 0, 0.25);
  }
  .vscroll { grid-area: 1 / 3 / 3 / 4; background: #f1f1f1; display: flex; flex-direction: column; color: #505050; padding: 7px 0 2px 2px; }
  .vscroll span { padding-left: 4px; }
  .vscroll i { height: 743px; background: #a8a8a8; margin-top: 49px; }
  .end { margin-top: auto; }
</style>
